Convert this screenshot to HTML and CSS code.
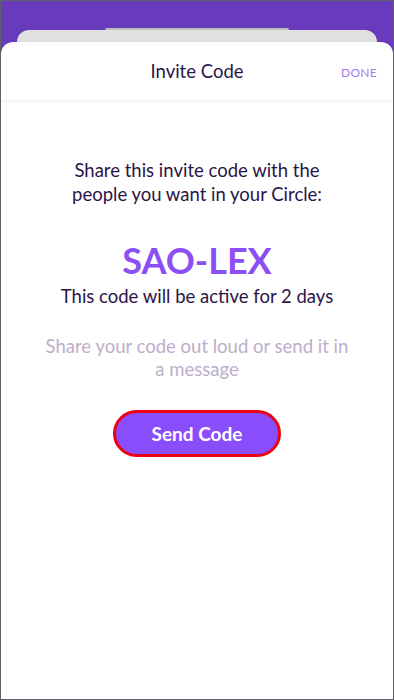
FILE: index.html
```html
<!DOCTYPE html>
<html lang="en">
<head>
  <meta charset="UTF-8">
  <title>Invite Code</title>
  <link rel="stylesheet" href="styles.css">
</head>
<body>
  <div class="screen">
    <div class="deck">
      <div class="card-far"></div>
      <div class="card-near"></div>
    </div>

    <div class="sheet">
      <div class="header">
        <h1>Invite Code</h1>
        <a class="done" href="#">DONE</a>
      </div>

      <div class="content">
        <p class="lead">Share this invite code with the<br>people you want in your Circle:</p>
        <div class="code">SAO-LEX</div>
        <p class="expires">This code will be active for 2 days</p>
        <p class="hint">Share your code out loud or send it in<br>a message</p>
        <button class="send">Send Code</button>
      </div>
    </div>
  </div>
</body>
</html>
```

FILE: styles.css
```css
    * {
      box-sizing: border-box;
    }

    body {
      margin: 0;
      font-family: 'Lato', 'Noto Sans', sans-serif;
      background: #fff;
    }

    .screen {
      width: 394px;
      height: 700px;
      background: #683bbd;
      border: 1px solid #5f5f66;
      display: flex;
      flex-direction: column;
      overflow: hidden;
    }

    .deck {
      padding-top: 27px;
    }

    .card-far {
      height: 2px;
      margin: 0 104px;
      background: #bcbcbc;
      border-radius: 8px 8px 0 0;
    }

    .card-near {
      height: 12px;
      margin: 0 16px;
      background: #e0e0e0;
      border-radius: 12px 12px 0 0;
    }

    .sheet {
      flex: 1;
      background: #fff;
      border-radius: 12px 12px 0 0;
      display: flex;
      flex-direction: column;
    }

    .header {
      height: 58px;
      display: flex;
      align-items: center;
      justify-content: center;
      position: relative;
      box-shadow: 0 2px 4px rgba(0, 0, 0, 0.06);
    }

    .header h1 {
      margin: 0;
      font-size: 18.5px;
      font-weight: 400;
      color: #2b1547;
    }

    .done {
      position: absolute;
      right: 16px;
      top: 23px;
      font-size: 12px;
      color: #a47cf2;
      text-decoration: none;
      letter-spacing: 0.3px;
    }

    .content {
      display: flex;
      flex-direction: column;
      align-items: center;
      text-align: center;
      padding: 58px 20px 0;
    }

    .lead {
      margin: 0;
      font-size: 18.5px;
      line-height: 24px;
      color: #2b1547;
    }

    .code {
      margin-top: 34px;
      font-size: 36px;
      line-height: 40px;
      font-weight: 700;
      color: #8c4ff5;
    }

    .expires {
      margin: 5px 0 0;
      font-size: 18.5px;
      line-height: 22px;
      color: #2b1547;
    }

    .hint {
      margin: 28px 0 0;
      font-size: 18.5px;
      line-height: 23px;
      color: #bcaecb;
    }

    .send {
      margin-top: 29px;
      width: 168px;
      height: 47px;
      border: 3px solid #ec0016;
      border-radius: 24px;
      background: #8a4dfb;
      color: #fff;
      font-family: inherit;
      font-size: 19px;
      font-weight: 700;
      cursor: pointer;
    }
```
